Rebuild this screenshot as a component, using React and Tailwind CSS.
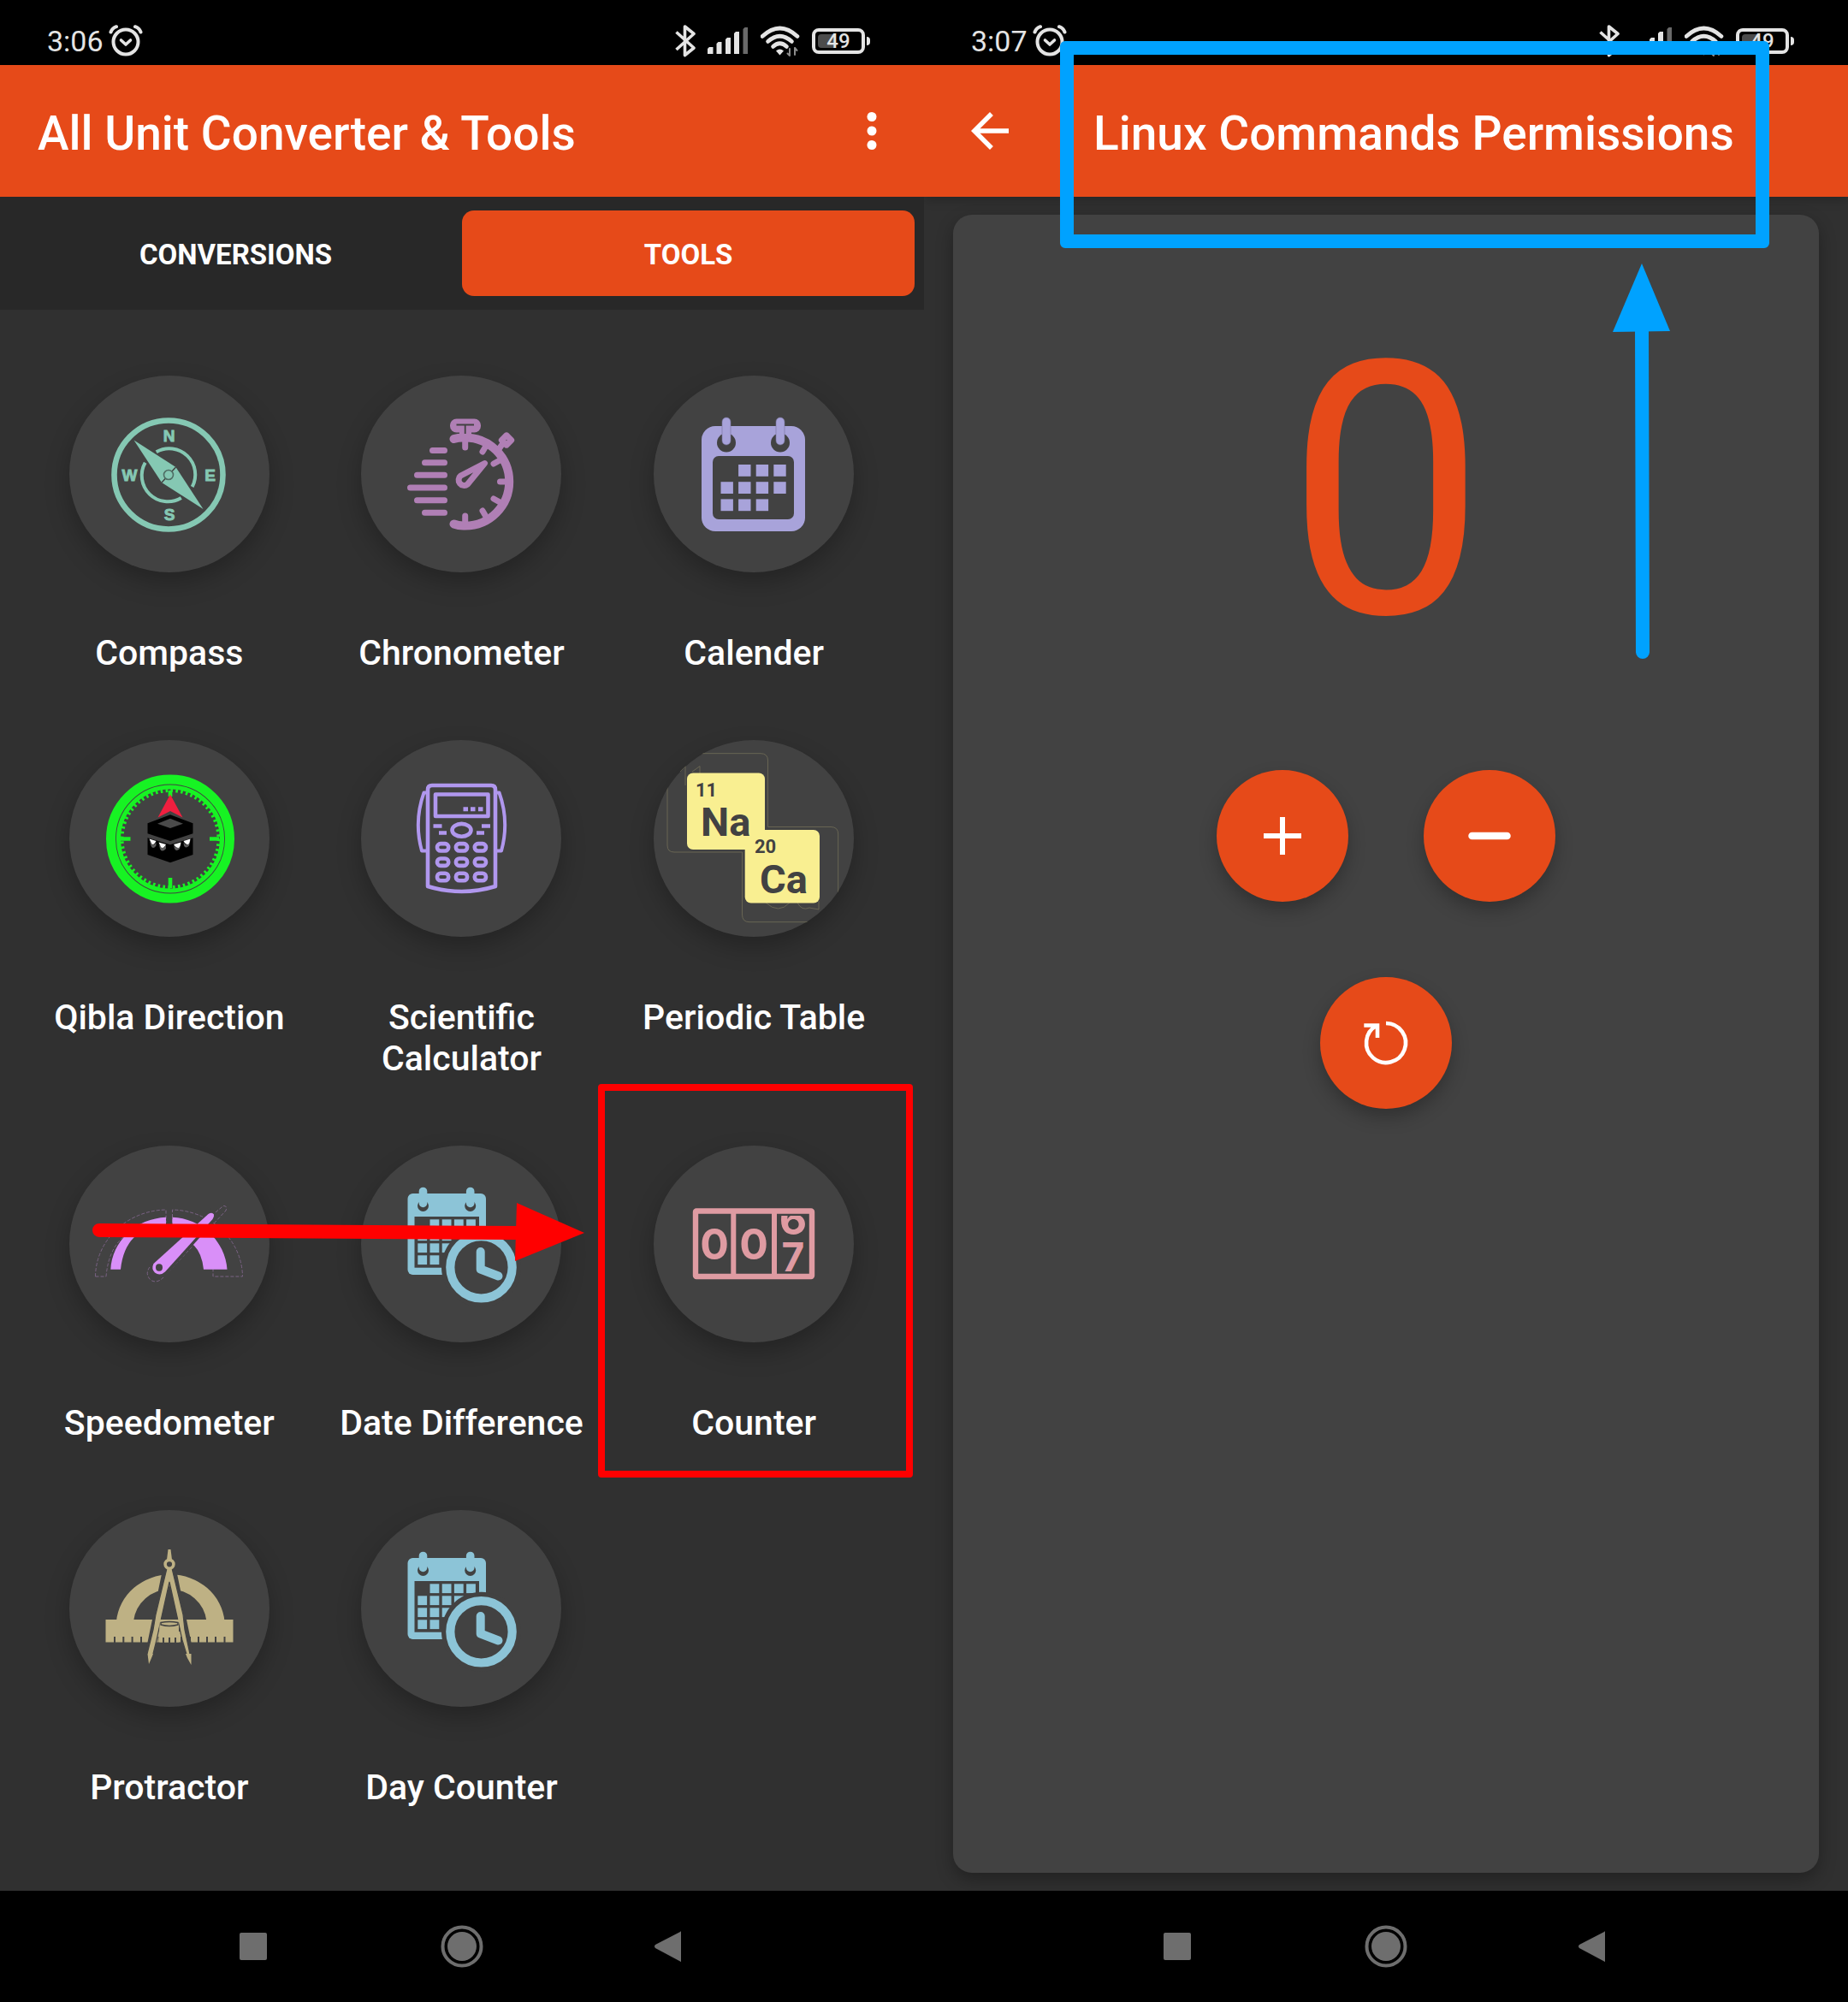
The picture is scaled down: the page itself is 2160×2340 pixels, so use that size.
import React, { useState } from "react";

const DISC = "#424242";

function AlarmIcon() {
  return (
    <svg className="h-10 w-10" viewBox="0 0 40 40" fill="none" stroke="#e4e4e4" strokeLinecap="round" aria-hidden="true">
      <circle cx="20" cy="21" r="14.5" strokeWidth="4" />
      <path d="M14.5 19l5.500 5 5.500-5" strokeWidth="3.600" strokeLinejoin="round" />
      <path d="M2.500 9.500Q4 5 9 3.200M37.500 9.500Q36 5 31 3.200" strokeWidth="4" />
    </svg>
  );
}

function BluetoothIcon() {
  return (
    <svg className="h-10 w-6" viewBox="0 0 24 40" fill="none" stroke="#e4e4e4" strokeWidth="3.6" aria-hidden="true">
      <path d="M1.500 9.500L22 28 11.500 36.500V3L22 11.500 1.500 30" strokeLinejoin="round" />
    </svg>
  );
}

function SignalIcon() {
  return (
    <svg className="h-10 w-12" viewBox="0 0 48 40" fill="#e4e4e4" aria-hidden="true">
      <path d="M0 29l2-2h4.500v8H0zM10.500 23l2-2h4v14h-6zM21 18l2-2h4v19h-6zM31 11l2-2h4v26h-6z" />
      <path d="M41.500 6l2-2H47v31h-5.500z" fill="#6a6a6a" />
    </svg>
  );
}

function WifiIcon() {
  return (
    <svg className="h-10 w-[46px]" viewBox="1 0 46 40" fill="none" stroke="#e4e4e4" strokeWidth="4.600" strokeLinecap="round" aria-hidden="true">
      <path d="M3 14.500Q23.500-4.500 44 14.500" />
      <path d="M9.500 20.500Q23.500 8 37.500 20.500" />
      <path d="M15.500 26.500Q23.500 19 31.500 26.500" />
      <path d="M19 31.500q4.500-4 9 0l-4.500 5z" fill="#e4e4e4" stroke="none" />
      <path d="M35 29v8M41 28v8M32.500 34.500l2.500 2.500M43.500 31l-2.500-3" stroke="#8c8c8c" strokeWidth="2" />
    </svg>
  );
}

function Battery() {
  return (
    <div className="flex items-center gap-0.5">
      <div className="relative flex h-[30px] w-[62px] items-center justify-center rounded-lg border-4 border-[#e4e4e4]">
        <span className="absolute inset-y-[3px] left-[3px] w-5 rounded-l bg-[#4c4c4c]" />
        <span className="relative text-2xl leading-none font-medium text-[#e4e4e4]">49</span>
      </div>
      <span className="h-2.5 w-1 rounded-r bg-[#e4e4e4]" />
    </div>
  );
}

function StatusBar({ time }) {
  return (
    <div className="flex h-[76px] items-center justify-between bg-black pt-5 pr-[63px] pl-[55px] text-[34px] text-[#e4e4e4]">
      <div className="flex items-center gap-1.5">
        <span className="leading-10">{time}</span>
        <AlarmIcon />
      </div>
      <div className="flex items-center gap-3.5">
        <BluetoothIcon />
        <SignalIcon />
        <WifiIcon />
        <Battery />
      </div>
    </div>
  );
}

function NavBar() {
  return (
    <nav className="flex h-[130px] items-center justify-center bg-black text-[#6e6e6e]">
      <button type="button" aria-label="Recent apps" className="flex w-[244px] justify-center">
        <svg className="size-[50px]" viewBox="0 0 50 50" fill="currentColor"><rect x="9" y="9" width="32" height="32" rx="2" /></svg>
      </button>
      <button type="button" aria-label="Home" className="flex w-[244px] justify-center">
        <svg className="size-[50px]" viewBox="0 0 50 50" fill="currentColor">
          <circle cx="25" cy="25" r="17" />
          <circle cx="25" cy="25" r="22.500" fill="none" stroke="currentColor" strokeWidth="4" />
        </svg>
      </button>
      <button type="button" aria-label="Back" className="flex w-[244px] justify-center">
        <svg className="size-[50px]" viewBox="0 0 50 50" fill="currentColor"><path d="M36 8Q37 6.500 37 8.500V42q0 2-1 .5L7 27q-2-2 0-4z" /></svg>
      </button>
    </nav>
  );
}

function CompassIcon() {
  const c = "#85c8b3";
  return (
    <g>
      <circle cx="116" cy="116" r="63.500" fill="none" stroke={c} strokeWidth="6.600" />
      <path d="M101.700 89.200A30.500 30.500 0 0 1 143.700 130M130.800 143A30.500 30.500 0 0 1 88.700 101.700" fill="none" stroke={c} strokeWidth="4" />
      <path d="M75.500 75.500L124.500 107 156.500 156 108 125z" fill={c} />
      <path d="M124.500 107L108 125" stroke={DISC} strokeWidth="1.500" />
      <circle cx="116" cy="116" r="5.500" fill={c} stroke="#4f6d64" strokeWidth="1.600" />
      <g fill={c} stroke={c} strokeWidth="0.900" fontSize="19" fontWeight="700" textAnchor="middle" className="font-['Liberation_Sans',sans-serif]">
        <text x="116.500" y="77">N</text>
        <text x="70.500" y="122.500">W</text>
        <text x="164.500" y="122.500">E</text>
        <text x="117" y="168.500">S</text>
      </g>
    </g>
  );
}

function ChronometerIcon() {
  const c = "#b07fb5";
  return (
    <g fill="none" stroke={c} strokeLinecap="round" strokeWidth="7">
      <path d="M83.500 87.500H97.500M74.500 101.700H97.500M65.500 116.300H97.500M57.500 131H97.500M65.500 145.700H97.500M74.500 160.300H97.500" />
      <path d="M108.500 74Q115 72 121.700 72.500A51.500 51.500 0 0 1 121.700 175.500Q115 176 108.500 173.500" strokeWidth="10" />
      <path d="M121.700 72V84M142 89l5-8.500M155 103l9-5M162.500 124H172M155 144l9 5M142 158l5 8.500M121.700 164V174M161 86l5-7" strokeWidth="7" />
      <rect x="104" y="50.500" width="36" height="16" rx="7.500" fill={c} stroke="none" />
      <path d="M115 62H129V73H115z" fill={c} stroke="none" />
      <path d="M111.500 57.500H132M121.700 57.500V68" stroke={DISC} strokeWidth="1.800" strokeLinecap="butt" />
      <rect x="-4" y="-4" width="8" height="8" transform="translate(170 75.500) rotate(45)" fill={DISC} strokeWidth="7" strokeLinejoin="round" />
      <path d="M144.500 102.500L116.500 117A6 6 0 1 0 124.500 127z" strokeWidth="7" strokeLinejoin="round" />
    </g>
  );
}

function CalendarIcon() {
  const c = "#a8a3da";
  const cells = [[1, 0], [2, 0], [3, 0], [0, 1], [1, 1], [2, 1], [3, 1], [0, 2], [1, 2], [2, 2]];
  return (
    <g fill={c}>
      <rect x="56" y="59" width="121" height="123" rx="16" />
      <rect x="69" y="94" width="95" height="74" rx="7" fill={DISC} />
      <circle cx="85" cy="78.500" r="11" fill={DISC} />
      <circle cx="148" cy="78.500" r="11" fill={DISC} />
      <rect x="80" y="49" width="10" height="32" rx="5" stroke="#77749a" strokeWidth="0.600" />
      <rect x="143" y="49" width="10" height="32" rx="5" stroke="#77749a" strokeWidth="0.600" />
      {cells.map(([x, y]) => (
        <rect key={x + "-" + y} x={78.5 + x * 20.6} y={104 + y * 20.2} width="14.400" height="13.800" />
      ))}
    </g>
  );
}

function QiblaIcon() {
  const c = "#17f323";
  return (
    <g>
      <g fill="none" stroke={c}>
        <circle cx="118" cy="115.500" r="69.500" strokeWidth="11" />
        <circle cx="118" cy="115.500" r="60.500" strokeWidth="5.200" />
        <circle cx="118" cy="115.500" r="56.500" strokeWidth="4" strokeDasharray="2.6 3.317" />
        <path d="M118 59V66M118 161V173M60 115.500H71.500M164 115.500H175" strokeWidth="4.600" />
      </g>
      <path d="M118 63.500L132.500 90.500 118 83 103.500 90.500z" fill="#f01f3f" />
      <path d="M91.500 97.300L118 87.300 144.500 97.300V109.300L118 118 91.500 109.300z" fill="#000" />
      <path d="M103 97.700L118 91.700 133 97.700 118 103z" fill="#4a4a4a" />
      <path d="M91.500 114.300L118 122.300 144.500 114.300V134L118 143.300 91.500 134z" fill="#000" />
      <path d="M93.500 117q4 9 8 2.500v4q-4 5-6 0zM104.500 120.500q4 9 8.500 2.500v4q-5 5-7 0zM122 123q4.500 6.500 8.500-2.500l-1.500 6.500q-4 4-6 0zM133.500 119.500q4 6.500 8-2.500l-1.500 6.500q-4 4-6 0z" fill="#5c5c5c" />
      <path d="M93.500 115.500l8 2.500q-3 6-5.500 3zM104.500 119.500l8.500 2.500q-3.500 6-6 3zM122 122l8.500-2.500q-1 6.500-3 6.500-3 0-5.500-4zM133.500 118l8-2.500q-1 6.500-3 6.500-3 0-5-4z" fill="#fff" />
    </g>
  );
}

function CalculatorIcon() {
  const c = "#b097ee";
  return (
    <g fill="none" stroke={c} strokeWidth="4.600" strokeLinejoin="round">
      <path d="M78 171V58Q78 53 83 53H152Q157 53 157 58V171Q117.500 183 78 171z" />
      <path d="M77 61.500H73.500Q61.500 95 71 129.500H77M158 61.500H161.500Q173.500 95 164 129.500H158" strokeWidth="4" />
      <rect x="87" y="63.500" width="61.500" height="25.500" />
      <ellipse cx="117.500" cy="105.300" rx="11" ry="7.400" />
      <g fill={c} stroke="none">
        <path d="M119.500 78.300h5.500v5h-5.500zM128 78.300h5.500v5H128zM137 78.300h5.500v5H137z" />
        <path d="M84.500 98.300h10v4.500h-10zM91 106.300h9v4.500h-9zM141 98.300h10v4.500h-10zM135 106.300h9v4.500h-9z" />
      </g>
      {[125.3, 142.7, 160].map((y) =>
        [95.6, 117.5, 139.4].map((x) => (
          <rect key={x + "-" + y} x={x - 6.6} y={y - 4.2} width="13.200" height="8.400" rx="4" />
        ))
      )}
    </g>
  );
}

function PeriodicIcon() {
  const c = "#f9ef91";
  return (
    <g fontWeight="700" className="font-[Roboto,sans-serif]">
      <clipPath id="periodic-disc"><rect width="234" height="230" rx="115" /></clipPath>
      <g clipPath="url(#periodic-disc)" fill="none" stroke="#6d6a56" strokeWidth="0.900">
        <path d="M133.500 101.500V24Q133.500 15.700 125 15.700H24Q16 15.700 16 24V123Q16 131 24 131H103.500V204Q103.500 212.700 112 212.700H207Q215.700 212.700 215.700 204V110Q215.700 101.500 207 101.500z" />
        <path d="M31 37l6-6.500V53M45 37l9-6.500V40M131 190q15 14 28 0M168 190q5 10 14 6l11 2v-10" />
      </g>
      <rect x="39" y="38.500" width="91" height="89.500" rx="7" fill={c} />
      <rect x="106.700" y="105" width="87.300" height="85.500" rx="7" fill={c} />
      <g fill={DISC}>
        <text x="49" y="66" fontSize="22">11</text>
        <text x="55" y="112" fontSize="47">Na</text>
        <text x="118" y="132" fontSize="22">20</text>
        <text x="124" y="179" fontSize="47">Ca</text>
      </g>
    </g>
  );
}

function SpeedometerIcon() {
  const c = "#d98ff8";
  return (
    <g>
      <g fill="none" stroke="#7a6284" strokeWidth="1" strokeDasharray="4 2">
        <path d="M30.500 153A84 79 0 0 1 113 75V90M30.500 153H43Q46 118 68 103M120.500 90V75A84 79 0 0 1 202.500 153H168V144" />
        <path d="M94 142Q88 150 95 157 102 162 110 154L183 76Q185 70 180 70.500L165 83" />
      </g>
      <path d="M48.300 144.700A68 64 0 0 1 113 83.700V92Q65 96 60 144.700z" fill={c} />
      <path d="M120.500 83.700A67 66 0 0 1 184.500 144.700H157Q155 126 146 117L126 97 120.500 96z" fill={c} />
      <path d="M170 78L106 150" stroke={DISC} strokeWidth="13" />
      <path d="M98.500 138L162.500 80Q167 77.500 169 80.500 169.500 83 167.500 86L112 147.500Q106 153 100 148.500 95.500 144 98.500 138z" fill={c} />
      <ellipse cx="105" cy="142.500" rx="4" ry="4.200" fill={DISC} />
    </g>
  );
}

function CalendarClockIcon() {
  const c = "#8cc4d7";
  const cells = [[1, 0], [2, 0], [3, 0], [4, 0], [0, 1], [1, 1], [2, 1], [3, 1], [0, 2], [1, 2], [2, 2], [0, 3], [1, 3]];
  return (
    <g fill={c}>
      <rect x="54.500" y="56" width="91.500" height="95" rx="6" />
      <rect x="62.500" y="83" width="75.500" height="59.700" fill={DISC} />
      <circle cx="72.500" cy="70.500" r="6.500" fill={DISC} />
      <circle cx="127.700" cy="70.500" r="6.500" fill={DISC} />
      <rect x="67.700" y="48.700" width="9.600" height="23.500" rx="4.800" />
      <rect x="122.900" y="48.700" width="9.600" height="23.500" rx="4.800" />
      {cells.map(([x, y]) => (
        <rect key={x + "-" + y} x={66.3 + x * 14.2} y={86.3 + y * 14} width="10.800" height="10.800" />
      ))}
      <circle cx="140.500" cy="142.300" r="46.500" fill={DISC} />
      <circle cx="140.500" cy="142.300" r="36.200" fill="none" stroke={c} strokeWidth="10.200" />
      <path d="M139.700 124V144.500L160.500 152.500" fill="none" stroke={c} strokeWidth="10" strokeLinecap="round" strokeLinejoin="round" />
    </g>
  );
}

function CounterIcon() {
  const c = "#df9ba2";
  return (
    <g fill={c} fontWeight="700" textAnchor="middle" className="font-[Inter,sans-serif]">
      <rect x="49" y="76.500" width="136" height="76.500" rx="1" fill="none" stroke={c} strokeWidth="6.400" />
      <path d="M93.300 76V154M141 76V154" stroke={c} strokeWidth="6" />
      <clipPath id="wheel"><path d="M144 82H182V150H144z" /></clipPath>
      <text x="71" y="133" fontSize="50">0</text>
      <text x="117" y="133" fontSize="50">0</text>
      <g clipPath="url(#wheel)">
        <text x="163" y="104" fontSize="50">6</text>
        <text x="163" y="147" fontSize="46">7</text>
      </g>
    </g>
  );
}

function ProtractorIcon() {
  const c = "#beb184";
  return (
    <g fill={c}>
      <path d="M55 130A63.500 60 0 0 1 181.500 130H160.500A43 42 0 0 0 75 130z" />
      <rect x="42.500" y="128" width="149" height="26.500" />
      <path d="M53 148v7M63.300 148v7M73.600 148v7M84 148v7M94.200 148v7M104.500 148v7M110 148v7M117 148v7M124 148v7M131 148v7M141 148v7M151 148v7M161 148v7M171 148v7M181.500 148v7" stroke={DISC} strokeWidth="2" />
      <path d="M113 70L92 172 92 178M121 70L142 172" fill="none" stroke={DISC} strokeWidth="8" />
      <path d="M114 68H120L133 122 135 140 141 168 138 172 132 152 117 84 102 152 97 172 91 168 98 140 101 122z" stroke={DISC} strokeWidth="1.200" />
      <path d="M117 86L104 142H130z" fill={DISC} />
      <path d="M106 128H128V154.500H125V149H123V154.500H118V149H116V154.500H111V149H109V154.500H104z" />
      <path d="M107 131.500Q117 129.500 127 131.500V134Q117 137 107 134z" fill={c} stroke={DISC} strokeWidth="1.500" />
      <path d="M91.500 168H98L96 173 93 180zM136 168H142.500L142.500 181 138 173z" />
      <path d="M115.500 46H118.500L120 58H114z" />
      <circle cx="117" cy="63.300" r="4.900" fill={DISC} stroke={c} strokeWidth="3.600" />
    </g>
  );
}

const TOOLS = [
  { label: "Compass", icon: CompassIcon },
  { label: "Chronometer", icon: ChronometerIcon },
  { label: "Calender", icon: CalendarIcon },
  { label: "Qibla Direction", icon: QiblaIcon },
  { label: "Scientific Calculator", icon: CalculatorIcon },
  { label: "Periodic Table", icon: PeriodicIcon },
  { label: "Speedometer", icon: SpeedometerIcon, pointer: true },
  { label: "Date Difference", icon: CalendarClockIcon },
  { label: "Counter", icon: CounterIcon, marked: true },
  { label: "Protractor", icon: ProtractorIcon },
  { label: "Day Counter", icon: CalendarClockIcon },
];

function Tool({ label, icon: Icon, marked, pointer }) {
  return (
    <li className="relative flex justify-center">
      <button type="button" className="flex w-full flex-col items-center gap-[70px] px-5">
        <span className="h-[230px] w-[234px] rounded-[117px/115px] bg-[#424242] shadow-[0_12px_28px_rgba(0,0,0,0.25)]">
          <svg className="size-full" viewBox="0 0 234 230" aria-hidden="true"><Icon /></svg>
        </span>
        <span className="text-[41px] leading-[48px] font-medium">{label}</span>
      </button>
      {marked && <span className="pointer-events-none absolute -top-[72px] -right-[15px] -left-[11px] h-[460px] rounded border-8 border-[#ff0000]" />}
      {pointer && (
        <svg className="pointer-events-none absolute top-[66px] left-[81px] z-10 h-[70px] w-[576px]" viewBox="0 0 576 70" aria-hidden="true">
          <path d="M8 33L498 36" stroke="#ff0000" strokeWidth="16" strokeLinecap="round" />
          <path d="M496 1L575 36 494 69z" fill="#ff0000" />
        </svg>
      )}
    </li>
  );
}

function ToolsScreen() {
  const [tab, setTab] = useState("TOOLS");
  return (
    <section className="flex min-w-0 flex-col bg-[#303030]">
      <StatusBar time="3:06" />
      <header className="flex h-[154px] items-center justify-between bg-[#e64a19] pr-7 pl-11">
        <h1 className="pt-1.5 text-[55px] leading-none font-medium">All Unit Converter &amp; Tools</h1>
        <button type="button" aria-label="More options">
          <svg className="size-[66px]" viewBox="0 0 24 24" fill="currentColor"><circle cx="12" cy="6" r="2" /><circle cx="12" cy="12" r="2" /><circle cx="12" cy="18" r="2" /></svg>
        </button>
      </header>
      <div role="tablist" className="grid h-[132px] grid-cols-2 bg-[#282828] px-[11px] py-4">
        {["CONVERSIONS", "TOOLS"].map((name) => (
          <button
            key={name}
            type="button"
            role="tab"
            aria-selected={tab === name}
            onClick={() => setTab(name)}
            className={tab === name ? "rounded-[14px] bg-[#e64a19] pt-1 text-[33px] font-bold" : "rounded-[14px] pt-1 text-[33px] font-bold"}
          >
            {name}
          </button>
        ))}
      </div>
      <main className="flex-1 pt-[77px] pr-7 pl-[27px]">
        <ul className="grid grid-cols-3 gap-y-[78px]">
          {TOOLS.map((t) => <Tool key={t.label} {...t} />)}
        </ul>
      </main>
      <NavBar />
    </section>
  );
}

function RoundButton({ label, onClick, children }) {
  return (
    <button type="button" aria-label={label} onClick={onClick} className="size-[154px] rounded-full bg-[#e64a19] shadow-[0_10px_20px_rgba(0,0,0,0.25)]">
      <svg className="size-full" viewBox="0 0 154 154" fill="none" stroke="#fff">{children}</svg>
    </button>
  );
}

function CounterScreen() {
  const [count, setCount] = useState(0);
  return (
    <section className="relative flex min-w-0 flex-col overflow-hidden bg-[#303030]">
      <StatusBar time="3:07" />
      <header className="flex h-[154px] items-center gap-22 bg-[#e64a19] pl-11 shadow-[0_4px_12px_rgba(0,0,0,0.2)]">
        <button type="button" aria-label="Back">
          <svg className="size-[66px]" viewBox="0 0 24 24" fill="currentColor"><path d="M20 11H7.830l5.590-5.590L12 4l-8 8 8 8 1.410-1.410L7.830 13H20v-2z" /></svg>
        </button>
        <h1 className="pt-1.5 text-[55px] leading-none font-medium whitespace-nowrap">Linux Commands Permissions</h1>
      </header>
      <main className="flex flex-1 px-[34px] py-[21px]">
        <div className="relative flex flex-1 flex-col items-center rounded-[22px] bg-[#424242] pt-[118px] shadow-[0_8px_20px_rgba(0,0,0,0.3)]">
          <output className="text-[413px] leading-[412px] text-[#e64a19]">{count}</output>
          <div className="mt-[119px] flex gap-22">
            <RoundButton label="Increase" onClick={() => setCount(count + 1)}>
              <path d="M55 77H99M77 55V99" strokeWidth="6" />
            </RoundButton>
            <RoundButton label="Decrease" onClick={() => setCount(count - 1)}>
              <path d="M56.500 77H97.500" strokeWidth="8.500" strokeLinecap="round" />
            </RoundButton>
          </div>
          <div className="mt-22">
            <RoundButton label="Reset" onClick={() => setCount(0)}>
              <path d="M77 54A23 23 0 1 1 66 56.800M51.300 56.500H67V71" strokeWidth="4.600" />
            </RoundButton>
          </div>
          <svg className="pointer-events-none absolute top-[57px] right-[173px] h-[464px] w-[68px]" viewBox="0 0 68 464" aria-hidden="true">
            <path d="M34 70L35 454" stroke="#00a2ff" strokeWidth="16" strokeLinecap="round" />
            <path d="M34 0L67 79 0 80z" fill="#00a2ff" />
          </svg>
        </div>
      </main>
      <NavBar />
      <div className="pointer-events-none absolute top-12 right-[92px] left-[159px] h-[242px] rounded-md border-[16px] border-[#00a2ff]" />
    </section>
  );
}

export default function App() {
  return (
    <div className="grid min-h-screen grid-cols-2 font-[Roboto,sans-serif] text-white">
      <ToolsScreen />
      <CounterScreen />
    </div>
  );
}
